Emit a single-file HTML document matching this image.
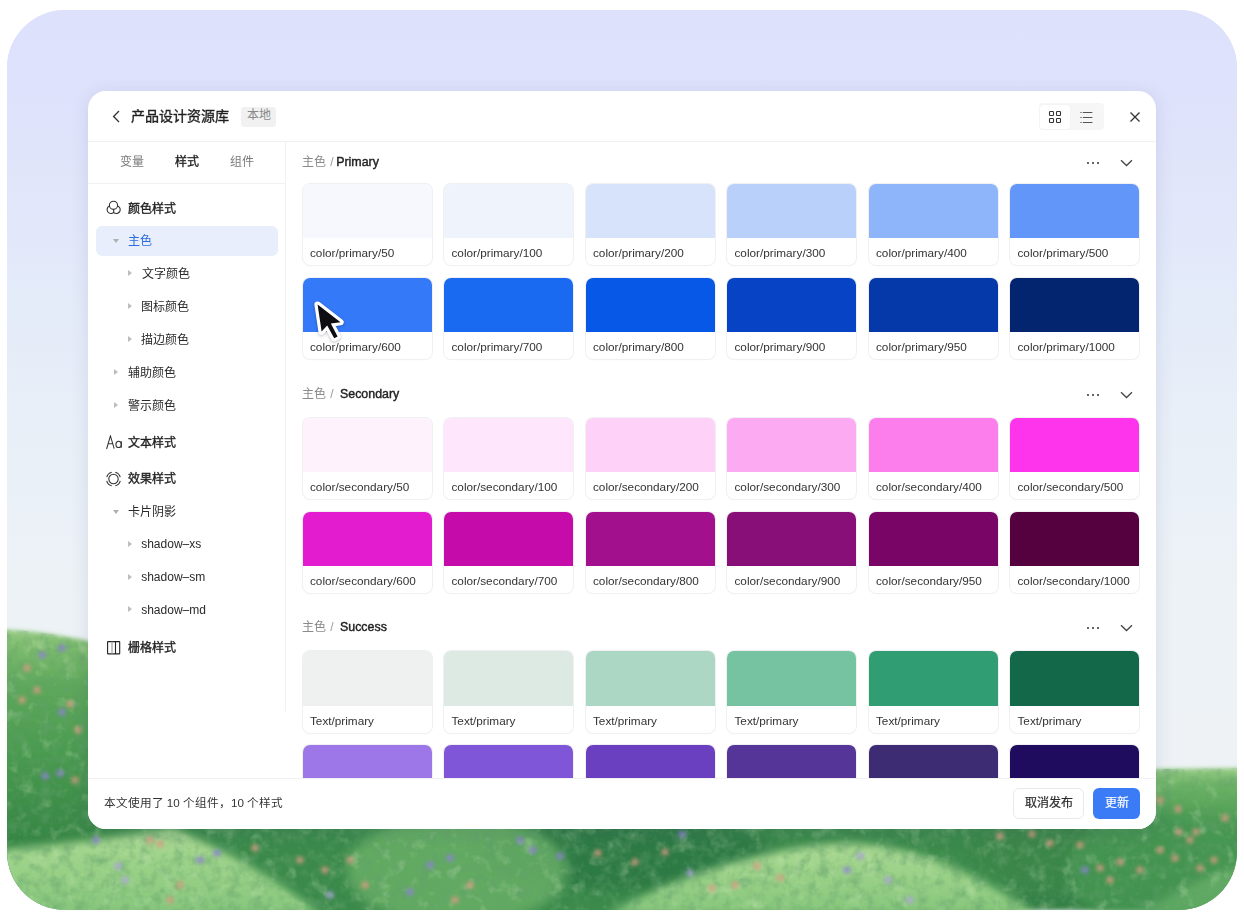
<!DOCTYPE html>
<html lang="zh-CN"><head><meta charset="utf-8">
<style>
*{margin:0;padding:0;box-sizing:border-box}
html,body{width:1244px;height:918px;overflow:hidden;background:#fff;font-family:"Liberation Sans",sans-serif;color:#1f1f1f}
#frame{position:absolute;left:7px;top:10px;width:1230px;height:900px;border-radius:58px;overflow:hidden;background:linear-gradient(180deg,#dfe0fb 0%,#e1e5fa 30%,#e8eef8 55%,#edf2f7 70%,#eef3f6 100%)}
#bg{position:absolute;left:0;top:0}
#panel{position:absolute;left:88px;top:91px;width:1068px;height:738px;background:#fff;border-radius:18px;overflow:hidden;box-shadow:0 3px 18px rgba(60,60,120,.13)}
.t{position:absolute;white-space:nowrap;line-height:12px;font-size:12px}
.hline{position:absolute;left:0;height:1px;background:#f1f1f3}
.vline{position:absolute;width:1px;background:#f1f1f3}
.sh .g{color:#8a8a8a}
.sh .sl{margin-left:5px;color:#9a9a9a}
.sht{color:#222;font-size:12.4px !important;-webkit-text-stroke:0.4px #222}
.dots{position:absolute;width:14px;height:3px}
.dots i{position:absolute;top:0;width:2.2px;height:2.2px;border-radius:50%;background:#333}
.dots i:nth-child(1){left:0}.dots i:nth-child(2){left:5px}.dots i:nth-child(3){left:10px}
.chev{position:absolute}
.card{position:absolute;width:129.3px;height:81.5px;border-radius:7px;overflow:hidden;background:#fff;box-shadow:0 0 0 1px #f0f0f2,0 1px 2px rgba(0,0,0,.03)}
.card .sw{position:absolute;left:0;top:0;width:100%;height:54.5px}
.card .lb{position:absolute;left:7.3px;top:63.5px;font-size:11.75px;line-height:12px;color:#333;white-space:nowrap}
.side .it{position:absolute;font-size:12px;line-height:12px;white-space:nowrap;color:#2a2a2a;transform:translateY(1px)}
.side .h{font-weight:400;color:#1f1f1f;-webkit-text-stroke:0.35px #1f1f1f}
.tri{position:absolute;width:0;height:0}
.tr{border-left:4px solid #bdbdbd;border-top:3px solid transparent;border-bottom:3px solid transparent}
.td{border-top:4px solid #b0b0b0;border-left:3px solid transparent;border-right:3px solid transparent}
.ico{position:absolute}
</style></head><body>
<div id="frame">
<svg id="bg" width="1230" height="900" viewBox="0 0 1230 900">
<defs>
<linearGradient id="sky" x1="0" y1="0" x2="0" y2="1">
<stop offset="0" stop-color="#dee1fc"/><stop offset="0.1" stop-color="#dfe2fb"/><stop offset="0.3" stop-color="#e3eaf9"/><stop offset="0.45" stop-color="#e8eff8"/><stop offset="0.65" stop-color="#edf2f6"/><stop offset="1" stop-color="#eef2f5"/></linearGradient>
<linearGradient id="bush" x1="0" y1="0" x2="0" y2="1">
<stop offset="0" stop-color="#9ccd88"/><stop offset="0.05" stop-color="#80bd70"/><stop offset="0.2" stop-color="#5ea85b"/><stop offset="0.45" stop-color="#4a9a50"/><stop offset="0.75" stop-color="#378645"/><stop offset="1" stop-color="#2e7a3f"/></linearGradient>
<linearGradient id="bushR" x1="0" y1="0" x2="0" y2="1">
<stop offset="0" stop-color="#98cc86"/><stop offset="0.12" stop-color="#6cb365"/><stop offset="0.45" stop-color="#45954f"/><stop offset="1" stop-color="#347f45"/></linearGradient>
<linearGradient id="hill" x1="0" y1="0" x2="0" y2="1">
<stop offset="0" stop-color="#acd994"/><stop offset="0.5" stop-color="#98d086"/><stop offset="1" stop-color="#86c67c"/></linearGradient>
<filter id="b2" x="-20%" y="-20%" width="140%" height="140%"><feGaussianBlur stdDeviation="2"/></filter>
<filter id="b4" x="-20%" y="-20%" width="140%" height="140%"><feGaussianBlur stdDeviation="4"/></filter>
<filter id="b6" x="-20%" y="-20%" width="140%" height="140%"><feGaussianBlur stdDeviation="6"/></filter>
<filter id="tex" x="0" y="0" width="100%" height="100%"><feTurbulence type="fractalNoise" baseFrequency="0.09" numOctaves="3" seed="4" result="n"/><feColorMatrix in="n" type="matrix" values="0 0 0 0 0.12  0 0 0 0 0.35  0 0 0 0 0.15  0 0 0 -2.2 1.25"/><feComposite in2="SourceGraphic" operator="in"/></filter>
<filter id="tex2" x="0" y="0" width="100%" height="100%"><feTurbulence type="fractalNoise" baseFrequency="0.07" numOctaves="3" seed="9" result="n"/><feColorMatrix in="n" type="matrix" values="0 0 0 0 0.75  0 0 0 0 0.9  0 0 0 0 0.6  0 0 0 2.6 -1.45"/><feComposite in2="SourceGraphic" operator="in"/></filter>
</defs>
<rect x="0" y="0" width="1230" height="900" fill="url(#sky)"/>
<path d="M-10 619 C 40 621, 80 630, 120 640 L 300 700 L 300 900 L -10 900 Z" fill="url(#bush)" filter="url(#b2)"/>
<path d="M900 762 L 1240 758 L 1240 900 L 900 900 Z" fill="url(#bushR)" filter="url(#b2)"/>
<rect x="200" y="780" width="800" height="130" fill="#3b8a4b"/>
<ellipse cx="620" cy="845" rx="150" ry="35" fill="#2f7a44" filter="url(#b6)"/>
<ellipse cx="1080" cy="840" rx="120" ry="40" fill="#3a8649" filter="url(#b6)"/>
<path d="M-10 840 C 40 836, 120 826, 165 818 C 220 840, 270 870, 315 905 L -10 905 Z" fill="url(#hill)" filter="url(#b4)"/>
<path d="M400 905 C 450 880, 480 835, 560 835 C 600 835, 640 860, 660 905 Z" fill="#7fbf6f" filter="url(#b6)" opacity="0.0"/>
<path d="M600 905 C 660 870, 760 834, 845 833 C 920 838, 980 870, 1030 905 Z" fill="url(#hill)" filter="url(#b4)"/>
<path d="M1130 905 C 1170 880, 1210 860, 1240 855 L 1240 905 Z" fill="url(#hill)" filter="url(#b4)"/>
<ellipse cx="450" cy="860" rx="110" ry="55" fill="#6cb268" filter="url(#b6)" opacity="0.8"/>
<ellipse cx="1150" cy="860" rx="90" ry="60" fill="#4a9a55" filter="url(#b6)" opacity="0.7"/>
<g opacity="0.55"><path d="M-10 619 C 40 621, 80 630, 120 640 L 300 700 L 900 762 L 1240 758 L 1240 900 L -10 900 Z" fill="#000" filter="url(#tex)"/></g>
<g opacity="0.3"><path d="M-10 619 C 40 621, 80 630, 120 640 L 300 700 L 900 762 L 1240 758 L 1240 900 L -10 900 Z" fill="#000" filter="url(#tex2)"/></g>
<g filter="url(#b2)"><circle cx="35" cy="645" r="3.6" fill="#8f80d8" opacity="0.85"/><circle cx="55" cy="638" r="3.6" fill="#8f80d8" opacity="0.85"/><circle cx="20" cy="658" r="3.6" fill="#dc9c84" opacity="0.85"/><circle cx="30" cy="680" r="3.6" fill="#dc9c84" opacity="0.85"/><circle cx="15" cy="690" r="3.6" fill="#dc9c84" opacity="0.85"/><circle cx="63" cy="694" r="3.6" fill="#dc9c84" opacity="0.85"/><circle cx="55" cy="702" r="3.6" fill="#8f80d8" opacity="0.85"/><circle cx="71" cy="720" r="3.6" fill="#dc9c84" opacity="0.85"/><circle cx="38" cy="766" r="3.6" fill="#8f80d8" opacity="0.85"/><circle cx="53" cy="763" r="3.6" fill="#8f80d8" opacity="0.85"/><circle cx="68" cy="770" r="3.6" fill="#dc9c84" opacity="0.85"/><circle cx="89" cy="830" r="3.6" fill="#8f80d8" opacity="0.85"/><circle cx="143" cy="830" r="3.6" fill="#dc9c84" opacity="0.85"/><circle cx="153" cy="834" r="3.6" fill="#dc9c84" opacity="0.85"/><circle cx="111" cy="856" r="3.6" fill="#b0a2e0" opacity="0.85"/><circle cx="118" cy="870" r="3.6" fill="#b0a2e0" opacity="0.85"/><circle cx="173" cy="875" r="3.6" fill="#dc9c84" opacity="0.85"/><circle cx="163" cy="890" r="3.6" fill="#dc9c84" opacity="0.85"/><circle cx="193" cy="850" r="3.6" fill="#8f80d8" opacity="0.85"/><circle cx="210" cy="843" r="3.6" fill="#8f80d8" opacity="0.85"/><circle cx="248" cy="838" r="3.6" fill="#dc9c84" opacity="0.85"/><circle cx="293" cy="850" r="3.6" fill="#dc9c84" opacity="0.85"/><circle cx="318" cy="860" r="3.6" fill="#dc9c84" opacity="0.85"/><circle cx="343" cy="850" r="3.6" fill="#dc9c84" opacity="0.85"/><circle cx="358" cy="875" r="3.6" fill="#dc9c84" opacity="0.85"/><circle cx="323" cy="885" r="3.6" fill="#b0a2e0" opacity="0.85"/><circle cx="403" cy="882" r="3.6" fill="#8f80d8" opacity="0.85"/><circle cx="423" cy="855" r="3.6" fill="#8f80d8" opacity="0.85"/><circle cx="443" cy="848" r="3.6" fill="#8f80d8" opacity="0.85"/><circle cx="448" cy="890" r="3.6" fill="#dc9c84" opacity="0.85"/><circle cx="463" cy="875" r="3.6" fill="#dc9c84" opacity="0.85"/><circle cx="513" cy="830" r="3.6" fill="#8f80d8" opacity="0.85"/><circle cx="526" cy="840" r="3.6" fill="#8f80d8" opacity="0.85"/><circle cx="553" cy="846" r="3.6" fill="#8f80d8" opacity="0.85"/><circle cx="591" cy="843" r="3.6" fill="#dc9c84" opacity="0.85"/><circle cx="628" cy="852" r="3.6" fill="#dc9c84" opacity="0.85"/><circle cx="658" cy="842" r="3.6" fill="#dc9c84" opacity="0.85"/><circle cx="675" cy="824" r="3.6" fill="#8f80d8" opacity="0.85"/><circle cx="683" cy="863" r="3.6" fill="#b0a2e0" opacity="0.85"/><circle cx="728" cy="875" r="3.6" fill="#dc9c84" opacity="0.85"/><circle cx="750" cy="856" r="3.6" fill="#dc9c84" opacity="0.85"/><circle cx="773" cy="868" r="3.6" fill="#dc9c84" opacity="0.85"/><circle cx="705" cy="878" r="3.6" fill="#dc9c84" opacity="0.85"/><circle cx="853" cy="846" r="3.6" fill="#b0a2e0" opacity="0.85"/><circle cx="840" cy="860" r="3.6" fill="#8f80d8" opacity="0.85"/><circle cx="881" cy="870" r="3.6" fill="#b0a2e0" opacity="0.85"/><circle cx="903" cy="890" r="3.6" fill="#b0a2e0" opacity="0.85"/><circle cx="993" cy="826" r="3.6" fill="#dc9c84" opacity="0.85"/><circle cx="1025" cy="824" r="3.6" fill="#dc9c84" opacity="0.85"/><circle cx="1043" cy="833" r="3.6" fill="#dc9c84" opacity="0.85"/><circle cx="1073" cy="835" r="3.6" fill="#dc9c84" opacity="0.85"/><circle cx="1078" cy="860" r="3.6" fill="#8f80d8" opacity="0.85"/><circle cx="1093" cy="858" r="3.6" fill="#dc9c84" opacity="0.85"/><circle cx="1113" cy="852" r="3.6" fill="#dc9c84" opacity="0.85"/><circle cx="1103" cy="870" r="3.6" fill="#dc9c84" opacity="0.85"/><circle cx="1133" cy="860" r="3.6" fill="#dc9c84" opacity="0.85"/><circle cx="1153" cy="840" r="3.6" fill="#dc9c84" opacity="0.85"/><circle cx="1168" cy="848" r="3.6" fill="#dc9c84" opacity="0.85"/><circle cx="1183" cy="830" r="3.6" fill="#dc9c84" opacity="0.85"/><circle cx="1172" cy="822" r="3.6" fill="#dc9c84" opacity="0.85"/><circle cx="1193" cy="858" r="3.6" fill="#dc9c84" opacity="0.85"/><circle cx="1207" cy="850" r="3.6" fill="#dc9c84" opacity="0.85"/><circle cx="1153" cy="790" r="3.6" fill="#dc9c84" opacity="0.85"/><circle cx="1171" cy="799" r="3.6" fill="#dc9c84" opacity="0.85"/><circle cx="1189" cy="822" r="3.6" fill="#dc9c84" opacity="0.85"/><circle cx="1218" cy="808" r="3.6" fill="#dc9c84" opacity="0.85"/></g>
</svg>
</div>
<div id="panel">
<!-- header -->
<svg class="ico" style="left:24px;top:19px" width="9" height="13" viewBox="0 0 9 13"><path d="M7 1 L1.6 6.5 L7 12" fill="none" stroke="#333" stroke-width="1.3"/></svg>
<div class="t" style="left:43px;top:18px;font-size:14px;line-height:14px;font-weight:400;color:#1f1f1f;-webkit-text-stroke:0.35px #1f1f1f">产品设计资源库</div>
<div style="position:absolute;left:152.5px;top:15.5px;width:35px;height:20px;border-radius:3px;background:#f1f1f2"></div>
<div class="t" style="left:158.5px;top:17.5px;color:#888">本地</div>
<div style="position:absolute;left:951px;top:11.5px;width:65px;height:27px;border-radius:4px;background:#f6f6f7"></div>
<div style="position:absolute;left:952px;top:13.5px;width:30px;height:24px;border-radius:3px;background:#fff;box-shadow:0 0 1px rgba(0,0,0,.08)"></div>
<svg class="ico" style="left:960px;top:19px" width="14" height="14" viewBox="0 0 14 14" fill="none" stroke="#333" stroke-width="1.1"><rect x="1.5" y="1.5" width="4" height="4" rx="0.7"/><rect x="8.5" y="1.5" width="4" height="4" rx="0.7"/><rect x="1.5" y="8.5" width="4" height="4" rx="0.7"/><rect x="8.5" y="8.5" width="4" height="4" rx="0.7"/></svg>
<svg class="ico" style="left:991.5px;top:19.5px" width="13" height="13" viewBox="0 0 13 13" fill="none" stroke="#555" stroke-width="1"><path d="M0.4 1.5H1.6M2.8 1.5H12.4M0.4 6.5H1.6M2.8 6.5H12.4M0.4 11.5H1.6M2.8 11.5H12.4"/></svg>
<svg class="ico" style="left:1041.5px;top:20.5px" width="10" height="10" viewBox="0 0 10 10" fill="none" stroke="#333" stroke-width="1.3"><path d="M0.5 0.5L9.5 9.5M9.5 0.5L0.5 9.5"/></svg>
<div class="hline" style="top:50px;width:1068px"></div>
<!-- sidebar -->
<div class="side">
<div class="vline" style="left:196.5px;top:51px;height:569px"></div>
<div class="hline" style="top:92px;width:197px"></div>
<div class="it" style="left:32.3px;top:64px;color:#7a7a7a">变量</div>
<div class="it h" style="left:87px;top:64px">样式</div>
<div class="it" style="left:141.9px;top:64px;color:#7a7a7a">组件</div>

<svg class="ico" style="left:18px;top:109px" width="16" height="15" viewBox="0 0 16 15" fill="none" stroke="#333" stroke-width="1.1"><circle cx="7.5" cy="5.3" r="4.1"/><path d="M3.46 6.02 A3.9 3.9 0 1 0 7.65 12.46 A3.9 3.9 0 1 0 11.55 5.91 M7.65 9.4 V12.46"/></svg>
<div class="it h" style="left:39.6px;top:111px">颜色样式</div>

<div style="position:absolute;left:8px;top:135px;width:182px;height:30px;border-radius:6px;background:#e8eefc"></div>
<div class="tri td" style="left:25.4px;top:148px"></div>
<div class="it" style="left:40px;top:143px;color:#2f6bdc">主色</div>

<div class="tri tr" style="left:39.6px;top:179px"></div>
<div class="it" style="left:53.7px;top:176px">文字颜色</div>
<div class="tri tr" style="left:39.6px;top:212px"></div>
<div class="it" style="left:53.3px;top:209px">图标颜色</div>
<div class="tri tr" style="left:39.6px;top:245px"></div>
<div class="it" style="left:53.3px;top:242px">描边颜色</div>

<div class="tri tr" style="left:25.5px;top:278px"></div>
<div class="it" style="left:40px;top:275px">辅助颜色</div>
<div class="tri tr" style="left:25.5px;top:311px"></div>
<div class="it" style="left:40px;top:308px">警示颜色</div>

<svg class="ico" style="left:18px;top:344px" width="17" height="15" viewBox="0 0 17 15" fill="none" stroke="#333" stroke-width="1.05"><path d="M0.6 14 L4.4 0.9 L8.2 13.7 M2.0 8.8 H6.8"/><ellipse cx="12.6" cy="9.4" rx="2.7" ry="3.1"/><path d="M15.3 6.2 V12.8"/></svg>
<div class="it h" style="left:40px;top:344.5px">文本样式</div>

<svg class="ico" style="left:17.6px;top:380px" width="16" height="16" viewBox="0 0 16 16" fill="none" stroke="#333" stroke-width="1.1"><circle cx="7.5" cy="8" r="4.7"/><path d="M0.74 6.19 A7 7 0 0 1 5.69 1.24 M9.31 1.24 A7 7 0 0 1 14.26 6.19 M14.26 9.81 A7 7 0 0 1 9.31 14.76 M5.69 14.76 A7 7 0 0 1 0.74 9.81"/></svg>
<div class="it h" style="left:39.9px;top:381px">效果样式</div>

<div class="tri td" style="left:25px;top:419.3px"></div>
<div class="it" style="left:40.4px;top:414px">卡片阴影</div>

<div class="tri tr" style="left:39.8px;top:449.5px"></div>
<div class="it" style="left:53.2px;top:446px">shadow–xs</div>
<div class="tri tr" style="left:39.8px;top:482.5px"></div>
<div class="it" style="left:53.2px;top:479px">shadow–sm</div>
<div class="tri tr" style="left:39.8px;top:515px"></div>
<div class="it" style="left:53.2px;top:512px">shadow–md</div>

<svg class="ico" style="left:19px;top:550px" width="14" height="14" viewBox="0 0 14 14" fill="none" stroke="#222" stroke-width="1.1"><rect x="0.6" y="0.6" width="12.1" height="12.3" rx="0.4"/><path d="M5 0.6V12.9" stroke="#999"/><path d="M8.5 0.6V12.9"/></svg>
<div class="it h" style="left:39.8px;top:550px">栅格样式</div>
</div>
<!-- content -->
<div class="t" style="left:213.5px;top:65px;color:#8a8a8a">主色</div><div class="t" style="left:242.2px;top:65px;color:#9a9a9a">/</div><div class="t sht" style="left:248.2px;top:65px">Primary</div><div class="dots" style="left:999px;top:70.69999999999999px"><i></i><i></i><i></i></div><svg class="chev" style="left:1032px;top:68px" width="13" height="8" viewBox="0 0 13 8"><path d="M1 1.2 L6.5 6.5 L12 1.2" fill="none" stroke="#444" stroke-width="1.3"/></svg>
<div class="card" style="left:214.7px;top:92.8px"><div class="sw" style="background:#f6f8fd"></div><div class="lb">color/primary/50</div></div>
<div class="card" style="left:356.2px;top:92.8px"><div class="sw" style="background:#eef3fc"></div><div class="lb">color/primary/100</div></div>
<div class="card" style="left:497.7px;top:92.8px"><div class="sw" style="background:#d7e3fa"></div><div class="lb">color/primary/200</div></div>
<div class="card" style="left:639.2px;top:92.8px"><div class="sw" style="background:#b9d0fb"></div><div class="lb">color/primary/300</div></div>
<div class="card" style="left:780.7px;top:92.8px"><div class="sw" style="background:#8eb4f9"></div><div class="lb">color/primary/400</div></div>
<div class="card" style="left:922.2px;top:92.8px"><div class="sw" style="background:#6296f8"></div><div class="lb">color/primary/500</div></div>
<div class="card" style="left:214.7px;top:186.8px"><div class="sw" style="background:#3479f8"></div><div class="lb">color/primary/600</div></div>
<div class="card" style="left:356.2px;top:186.8px"><div class="sw" style="background:#1a69f1"></div><div class="lb">color/primary/700</div></div>
<div class="card" style="left:497.7px;top:186.8px"><div class="sw" style="background:#0758e6"></div><div class="lb">color/primary/800</div></div>
<div class="card" style="left:639.2px;top:186.8px"><div class="sw" style="background:#0744c5"></div><div class="lb">color/primary/900</div></div>
<div class="card" style="left:780.7px;top:186.8px"><div class="sw" style="background:#0538a8"></div><div class="lb">color/primary/950</div></div>
<div class="card" style="left:922.2px;top:186.8px"><div class="sw" style="background:#03246e"></div><div class="lb">color/primary/1000</div></div>
<div class="t" style="left:213.5px;top:297px;color:#8a8a8a">主色</div><div class="t" style="left:242.2px;top:297px;color:#9a9a9a">/</div><div class="t sht" style="left:252.0px;top:297px">Secondary</div><div class="dots" style="left:999px;top:302.7px"><i></i><i></i><i></i></div><svg class="chev" style="left:1032px;top:300px" width="13" height="8" viewBox="0 0 13 8"><path d="M1 1.2 L6.5 6.5 L12 1.2" fill="none" stroke="#444" stroke-width="1.3"/></svg>
<div class="card" style="left:214.7px;top:326.6px"><div class="sw" style="background:#fef2fd"></div><div class="lb">color/secondary/50</div></div>
<div class="card" style="left:356.2px;top:326.6px"><div class="sw" style="background:#fee6fc"></div><div class="lb">color/secondary/100</div></div>
<div class="card" style="left:497.7px;top:326.6px"><div class="sw" style="background:#fdd1f8"></div><div class="lb">color/secondary/200</div></div>
<div class="card" style="left:639.2px;top:326.6px"><div class="sw" style="background:#fcabf3"></div><div class="lb">color/secondary/300</div></div>
<div class="card" style="left:780.7px;top:326.6px"><div class="sw" style="background:#fc7eed"></div><div class="lb">color/secondary/400</div></div>
<div class="card" style="left:922.2px;top:326.6px"><div class="sw" style="background:#fe34ec"></div><div class="lb">color/secondary/500</div></div>
<div class="card" style="left:214.7px;top:420.6px"><div class="sw" style="background:#e31cd0"></div><div class="lb">color/secondary/600</div></div>
<div class="card" style="left:356.2px;top:420.6px"><div class="sw" style="background:#c50caa"></div><div class="lb">color/secondary/700</div></div>
<div class="card" style="left:497.7px;top:420.6px"><div class="sw" style="background:#a2108e"></div><div class="lb">color/secondary/800</div></div>
<div class="card" style="left:639.2px;top:420.6px"><div class="sw" style="background:#880f77"></div><div class="lb">color/secondary/900</div></div>
<div class="card" style="left:780.7px;top:420.6px"><div class="sw" style="background:#790567"></div><div class="lb">color/secondary/950</div></div>
<div class="card" style="left:922.2px;top:420.6px"><div class="sw" style="background:#55003f"></div><div class="lb">color/secondary/1000</div></div>
<div class="t" style="left:213.5px;top:530px;color:#8a8a8a">主色</div><div class="t" style="left:242.2px;top:530px;color:#9a9a9a">/</div><div class="t sht" style="left:252.0px;top:530px">Success</div><div class="dots" style="left:999px;top:535.7px"><i></i><i></i><i></i></div><svg class="chev" style="left:1032px;top:533px" width="13" height="8" viewBox="0 0 13 8"><path d="M1 1.2 L6.5 6.5 L12 1.2" fill="none" stroke="#444" stroke-width="1.3"/></svg>
<div class="card" style="left:214.7px;top:560.0px"><div class="sw" style="background:#eef1f0"></div><div class="lb">Text/primary</div></div>
<div class="card" style="left:356.2px;top:560.0px"><div class="sw" style="background:#dde9e3"></div><div class="lb">Text/primary</div></div>
<div class="card" style="left:497.7px;top:560.0px"><div class="sw" style="background:#acd7c5"></div><div class="lb">Text/primary</div></div>
<div class="card" style="left:639.2px;top:560.0px"><div class="sw" style="background:#75c3a1"></div><div class="lb">Text/primary</div></div>
<div class="card" style="left:780.7px;top:560.0px"><div class="sw" style="background:#309e72"></div><div class="lb">Text/primary</div></div>
<div class="card" style="left:922.2px;top:560.0px"><div class="sw" style="background:#14684a"></div><div class="lb">Text/primary</div></div>
<div class="card" style="left:214.7px;top:654.0px"><div class="sw" style="background:#9d77e7"></div><div class="lb">Text/primary</div></div>
<div class="card" style="left:356.2px;top:654.0px"><div class="sw" style="background:#7f56d7"></div><div class="lb">Text/primary</div></div>
<div class="card" style="left:497.7px;top:654.0px"><div class="sw" style="background:#6a3fc0"></div><div class="lb">Text/primary</div></div>
<div class="card" style="left:639.2px;top:654.0px"><div class="sw" style="background:#563598"></div><div class="lb">Text/primary</div></div>
<div class="card" style="left:780.7px;top:654.0px"><div class="sw" style="background:#3d2b73"></div><div class="lb">Text/primary</div></div>
<div class="card" style="left:922.2px;top:654.0px"><div class="sw" style="background:#1f0c5f"></div><div class="lb">Text/primary</div></div>
<!-- footer -->
<div style="position:absolute;left:0;top:687px;width:1068px;height:51px;background:#fff"></div>
<div class="hline" style="top:687px;width:1068px"></div>
<div class="t" style="left:15.5px;top:706px;color:#333;font-size:11.65px">本文使用了 10 个组件，10 个样式</div>
<div style="position:absolute;left:925.3px;top:697.4px;width:70.5px;height:31px;border-radius:6px;border:1px solid #e9e9eb;background:#fff"></div>
<div class="t" style="left:936.5px;top:705.5px;color:#2a2a2a;-webkit-text-stroke:0.2px #2a2a2a">取消发布</div>
<div style="position:absolute;left:1004.9px;top:697.4px;width:47px;height:31px;border-radius:6px;background:#3b7cf6"></div>
<div class="t" style="left:1016.5px;top:705.5px;color:#fff;-webkit-text-stroke:0.15px #fff">更新</div>
</div>
<svg style="position:absolute;left:0;top:0" width="1244" height="918" viewBox="0 0 1244 918"><path d="M317.6 304.6 L340.5 322.2 L330.8 323.6 L337.6 336.4 L334.2 338.2 L327.2 325.6 L321.6 331.6 Z" fill="#0d0d12" stroke="#fff" stroke-width="6.4" stroke-linejoin="round" paint-order="stroke" filter="drop-shadow(0 1px 1.5px rgba(0,0,0,.25))"/></svg>
</body></html>
